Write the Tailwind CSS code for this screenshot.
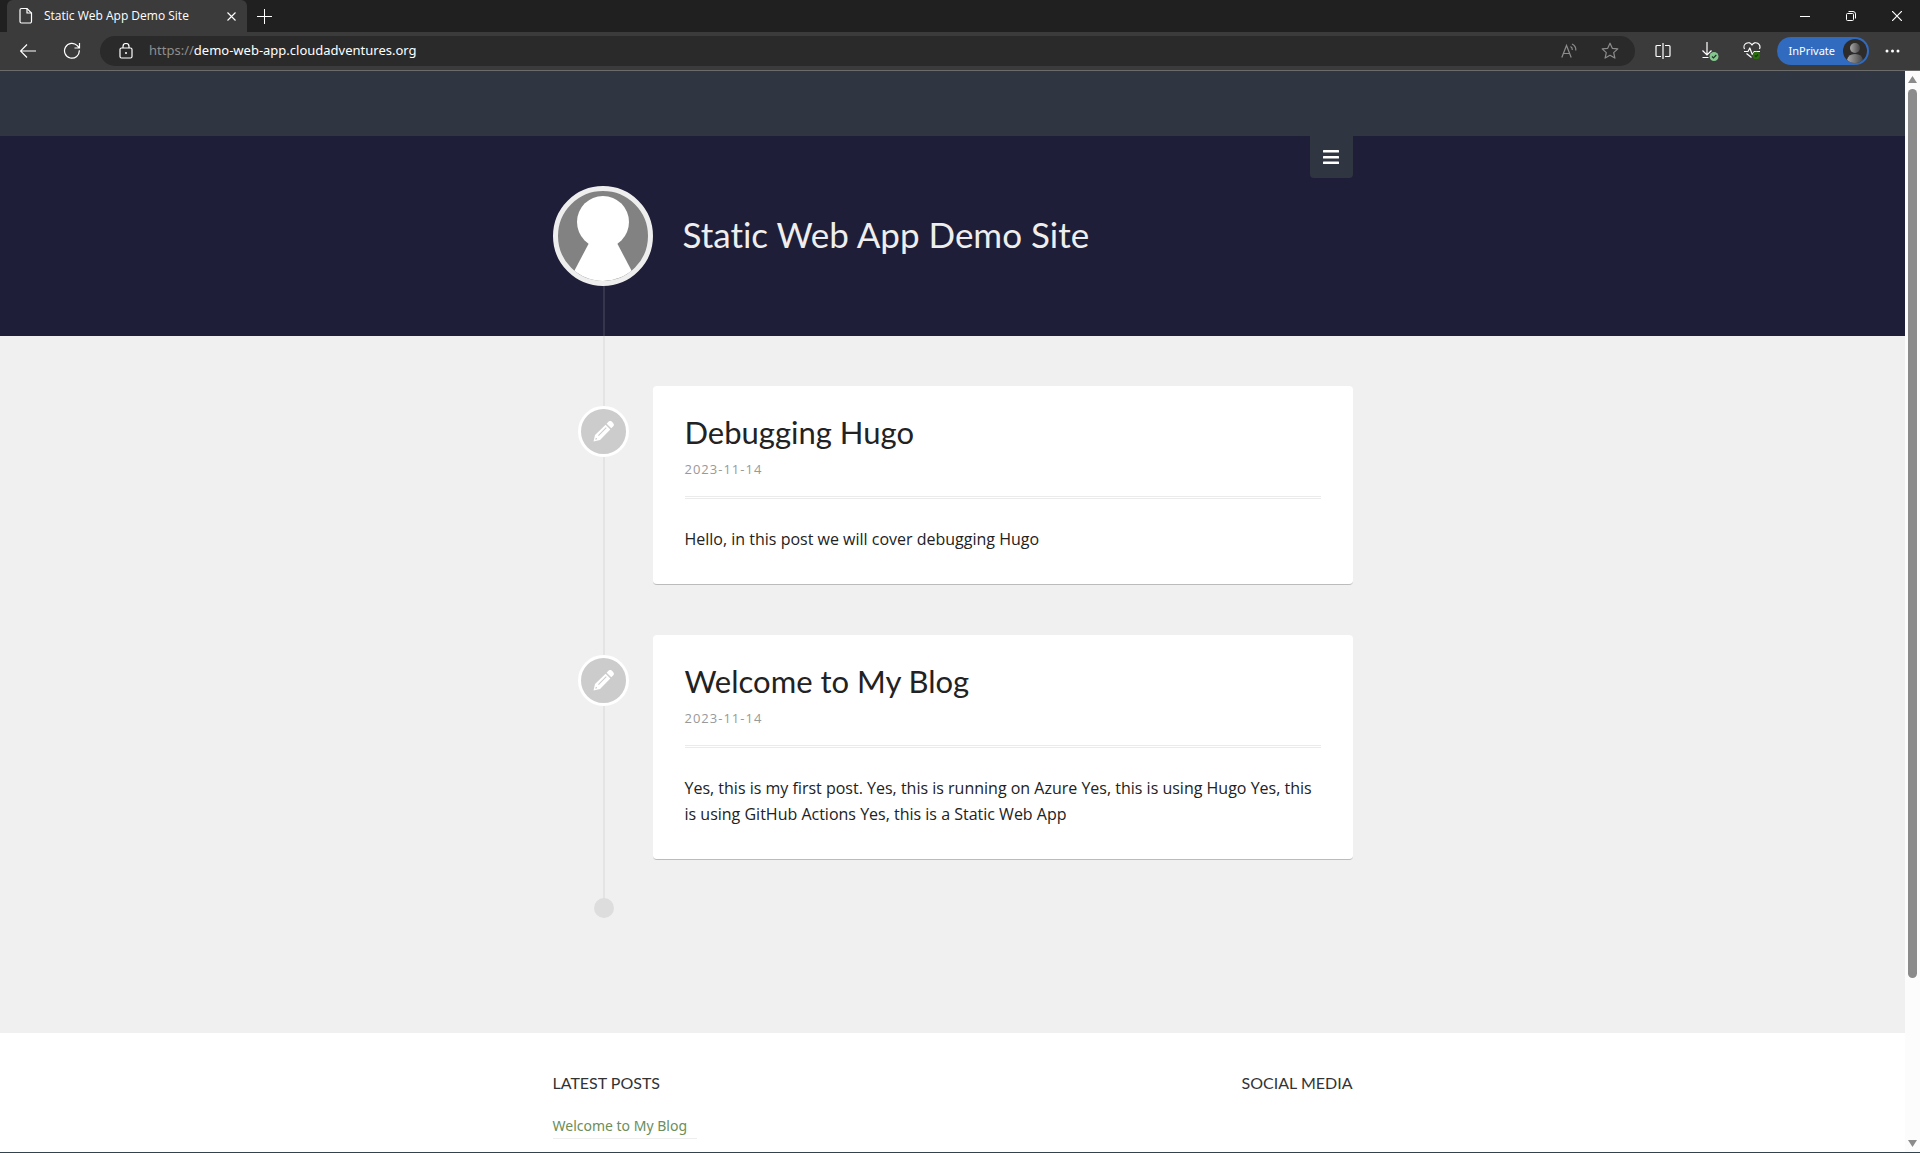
<!DOCTYPE html>
<html lang="en">
<head>
<meta charset="utf-8">
<title>Static Web App Demo Site</title>
<script src="https://cdn.jsdelivr.net/npm/@tailwindcss/browser@4"></script>
</head>
<body class="flex h-screen flex-col overflow-hidden bg-[#202020] font-['Open_Sans',sans-serif] text-[#222]">

<!-- Tab strip -->
<header class="shrink-0">
  <div class="flex h-8 items-stretch justify-between bg-[#202020] text-white">
    <div class="flex items-stretch pl-[7px]">
      <div class="flex w-60 items-center rounded-t-md bg-[#3b3b3b] pr-[6px] pl-3">
        <svg class="h-[18px] w-[14px]" viewBox="0 0 14 18" fill="none" stroke="#fff" stroke-width="1.2"><path d="M2.5 1.5h5.500l4.500 4.500v8.500a1.500 1.500 0 0 1-1.500 1.500h-8.500a1.500 1.500 0 0 1-1.500-1.500v-11.500a1.500 1.500 0 0 1 1.500-1.500z"/><path d="M8 1.500v4.500h4.500"/></svg>
        <span class="ml-[11px] flex-1 text-xs">Static Web App Demo Site</span>
        <button aria-label="Close tab" class="grid size-5 place-items-center"><svg class="size-[9px]" viewBox="0 0 9 9" stroke="#fff" stroke-width="1.100"><path d="M.5.5l8 8M8.500.5l-8 8"/></svg></button>
      </div>
      <button aria-label="New tab" class="grid w-[35px] place-items-center"><svg class="size-[15px]" viewBox="0 0 15 15" stroke="#fff"><path d="M7.500 0v15M0 7.500h15"/></svg></button>
    </div>
    <div class="flex">
      <button aria-label="Minimize" class="grid w-[46px] place-items-center"><svg class="size-[10px]" viewBox="0 0 10 10" stroke="#fff"><path d="M0 5.500h10"/></svg></button>
      <button aria-label="Restore" class="grid w-[46px] place-items-center"><svg class="size-[10px]" viewBox="0 0 10 10" fill="none" stroke="#fff"><rect x=".5" y="2.500" width="7" height="7" rx="1"/><path d="M2.500.5h4.500a2.500 2.500 0 0 1 2.500 2.500v4.500"/></svg></button>
      <button aria-label="Close" class="grid w-[46px] place-items-center"><svg class="size-[10px]" viewBox="0 0 10 10" stroke="#fff" stroke-width="1.200"><path d="M0 0l10 10M10 0l-10 10"/></svg></button>
    </div>
  </div>

  <!-- Toolbar -->
  <div class="flex h-[39px] items-center border-b border-[#6b6b6b] bg-[#3b3b3b] text-white">
    <button aria-label="Back" class="ml-2 grid w-10 place-items-center"><svg class="h-[14px] w-4" viewBox="0 0 16 14" fill="none" stroke="#fff" stroke-width="1.200"><path d="M16 7h-15M7 .5l-6.500 6.500l6.500 6.500"/></svg></button>
    <button aria-label="Refresh" class="ml-1 grid w-10 place-items-center"><svg class="size-[18px]" viewBox="0 0 18 18" fill="none" stroke="#fff" stroke-width="1.200"><path d="M16.300 8.300a7.400 7.400 0 1 1-2-4.600l2 2.300M16.500 1v5h-5"/></svg></button>
    <div class="ml-2 flex h-[30px] flex-1 items-center rounded-full bg-[#2a2a2a] pr-4 pl-[19px]">
      <svg class="h-4 w-[14px]" viewBox="0 0 14 16" fill="none" stroke="#fff" stroke-width="1.200"><rect x="1" y="5" width="12" height="10" rx="1.500"/><path d="M4 5v-1.500a3 3 0 0 1 6 0v1.500"/><circle cx="7" cy="10" r="1" fill="#fff" stroke="none"/></svg>
      <a href="https://demo-web-app.cloudadventures.org" class="ml-4 flex-1 font-['Noto_Sans',sans-serif] text-[13px]"><span class="text-[#8f8f8f]">https://</span>demo-web-app.cloudadventures.org</a>
      <button aria-label="Read aloud" class="mr-6"><svg class="size-4" viewBox="0 0 16 16" fill="none" stroke="#8c8c8c" stroke-width="1.200"><path d="M.8 14.500l4.700-12l4.700 12M2.400 10.500h6.200M9.500 3.500q2 1 1.800 3.500M11 1q4.200 2 3.800 6.500"/></svg></button>
      <button aria-label="Add to favorites"><svg class="size-[18px]" viewBox="0 0 18 18" fill="none" stroke="#8c8c8c" stroke-width="1.200" stroke-linejoin="round"><path d="M9 1.200l2.300 5.100l5.500.6l-4.100 3.700l1.200 5.500l-4.900-2.800l-4.900 2.800l1.200-5.500l-4.100-3.700l5.500-.6z"/></svg></button>
    </div>
    <button aria-label="Split screen" class="ml-5"><svg class="size-4" viewBox="0 0 16 16" fill="none" stroke="#fff" stroke-width="1.200"><path d="M6 2.500h-4q-1 0-1 1v9q0 1 1 1h4M10 2.500h4q1 0 1 1v9q0 1-1 1h-4M8 0v16"/></svg></button>
    <button aria-label="Downloads" class="ml-[30px]"><svg class="h-5 w-[18px]" viewBox="0 0 18 20" fill="none" stroke="#fff" stroke-width="1.200"><path d="M6 1v13M1.500 9.500l4.500 4.500l4.500-4.500M1.500 16.500h6"/><circle cx="13" cy="15.500" r="4.500" fill="#86c690" stroke="none"/><path d="M11 15.500l1.500 1.500l2.800-3" stroke="#1f3a24"/></svg></button>
    <button aria-label="Browser essentials" class="ml-6"><svg class="h-5 w-[18px]" viewBox="0 0 18 20" fill="none" stroke="#fff" stroke-width="1.200" stroke-linejoin="round"><path d="M1.500 8a4.200 4.200 0 0 1 7.500-4a4.200 4.200 0 0 1 7.500 4M1 10.500h4l1.800-3.500l2.500 6.500l2-3h5.700M3.500 12.500l5 4"/><circle cx="13.300" cy="14.500" r="3.700" fill="#2a6d0c" stroke="none"/><path d="M11.800 14.500l1.200 1.200l2-2.200" stroke="#123b05"/></svg></button>
    <button class="ml-4 flex h-7 items-center rounded-full bg-[#316bc0] pr-[2px] pl-3 font-['Noto_Sans',sans-serif] text-[11px]"><span class="mr-2">InPrivate</span>
      <svg class="size-6 rounded-full" viewBox="0 0 24 24"><defs><linearGradient id="g"><stop offset="0" stop-color="#aaa"/><stop offset="1" stop-color="#444"/></linearGradient></defs><rect width="24" height="24" fill="#2d2c2b"/><circle cx="12" cy="9" r="5" fill="url(#g)"/><path d="M4 21q1-6 8-6t8 6l-3 3h-10z" fill="url(#g)"/></svg></button>
    <button aria-label="Settings and more" class="mr-5 ml-4"><svg class="h-1 w-[15px]" viewBox="0 0 15 4" fill="#fff"><circle cx="2" cy="2" r="1.500"/><circle cx="7.500" cy="2" r="1.500"/><circle cx="13" cy="2" r="1.500"/></svg></button>
  </div>
</header>

<div class="flex min-h-0 flex-1 border-b border-[#33424f]">
  <div class="min-w-0 flex-1 overflow-hidden bg-white">
    <div class="h-[65px] bg-[#303641]"></div>

    <!-- Banner -->
    <div class="bg-[#1f1e38]">
      <div class="relative mx-auto flex h-[200px] max-w-[800px] flex-col">
        <div class="flex flex-1 items-end gap-[30px]">
          <svg class="mt-[50px] size-[100px] shrink-0 rounded-full border-[5px] border-[#eee] bg-[#828282]" viewBox="0 0 90 90" fill="#fff"><circle cx="45" cy="31" r="26"/><path d="M31 52l-20 38h68l-20-38z"/></svg>
          <h1 class="flex h-[100px] items-center pb-1 font-['Lato',sans-serif] text-[35px] [font-variant-ligatures:none] text-[#eee]">Static Web App Demo Site</h1>
        </div>
        <div class="ml-[50px] h-[50px] w-[2px] bg-white/10"></div>
        <button aria-label="Menu" class="absolute top-0 right-0 grid h-[42px] w-[43px] place-items-center rounded-b bg-[#303641]"><svg class="h-[14px] w-4" viewBox="0 0 16 14" fill="#fff"><rect width="16" height="2.500" rx=".5"/><rect y="6" width="16" height="2.500" rx=".5"/><rect y="11.500" width="16" height="2.500" rx=".5"/></svg></button>
      </div>
    </div>

    <!-- Timeline -->
    <main class="bg-[#f0f0f0] pb-[115px]">
      <div class="relative mx-auto max-w-[800px] pt-[50px] pb-[20px]">
        <div class="absolute top-0 bottom-0 left-[50px] w-[2px] bg-[#e4e4e4]"></div>
        <div class="absolute bottom-0 left-[41px] size-5 rounded-full bg-[#ddd]"></div>

        <article class="mb-[50px] flex items-start">
          <div class="relative mt-5 mr-6 ml-[25px] grid size-[51px] shrink-0 place-items-center rounded-full border-[3px] border-white bg-[#ccc]"><svg class="size-[21px]" viewBox="0 0 20 20" fill="#fff"><path d="M13 2.500l1.700-1.700a2.400 2.400 0 0 1 3.400 0l1 1a2.400 2.400 0 0 1 0 3.400l-1.700 1.700zM12 3.500l4.500 4.500l-9.800 10l-6.200 1.600l1.400-6.300zM12.300 6l-7.500 7.500l.7.700l7.500-7.500zM2.600 16.300l-.4 1.500l1.500-.4v-1.100z" fill-rule="evenodd"/></svg></div>
          <div class="min-w-0 flex-1 rounded border-b border-[#bbb] bg-white px-8 pt-7 pb-8">
            <h2 class="font-['Lato',sans-serif] text-[31px] leading-9"><a href="#debugging-hugo">Debugging Hugo</a></h2>
            <time class="mt-2 block text-[13px] leading-[22px] tracking-[1px] text-[#999]">2023-11-14</time>
            <hr class="mt-4 h-[3px] border-y border-t border-[#ebebeb]">
            <p class="mt-[27px] text-base leading-[26px]">Hello, in this post we will cover debugging Hugo</p>
          </div>
        </article>

        <article class="mb-[38px] flex items-start">
          <div class="relative mt-5 mr-6 ml-[25px] grid size-[51px] shrink-0 place-items-center rounded-full border-[3px] border-white bg-[#ccc]"><svg class="size-[21px]" viewBox="0 0 20 20" fill="#fff"><path d="M13 2.500l1.700-1.700a2.400 2.400 0 0 1 3.400 0l1 1a2.400 2.400 0 0 1 0 3.400l-1.700 1.700zM12 3.500l4.500 4.500l-9.800 10l-6.200 1.600l1.400-6.300zM12.300 6l-7.500 7.500l.7.700l7.500-7.500zM2.600 16.300l-.4 1.500l1.500-.4v-1.100z" fill-rule="evenodd"/></svg></div>
          <div class="min-w-0 flex-1 rounded border-b border-[#bbb] bg-white px-8 pt-7 pb-8">
            <h2 class="font-['Lato',sans-serif] text-[31px] leading-9"><a href="#welcome">Welcome to My Blog</a></h2>
            <time class="mt-2 block text-[13px] leading-[22px] tracking-[1px] text-[#999]">2023-11-14</time>
            <hr class="mt-4 h-[3px] border-y border-t border-[#ebebeb]">
            <p class="mt-[27px] text-base leading-[26px]">Yes, this is my first post. Yes, this is running on Azure Yes, this is using Hugo Yes, this is using GitHub Actions Yes, this is a Static Web App</p>
          </div>
        </article>
      </div>
    </main>

    <footer class="mx-auto flex max-w-[800px] justify-between pt-[38px]">
      <section>
        <h3 class="font-['Lato',sans-serif] text-base leading-6 text-[#333]">LATEST POSTS</h3>
        <a href="#welcome" class="mt-[18px] block border-b border-[#eee] pr-[10px] font-['Noto_Sans',sans-serif] text-sm leading-[25px] text-[#6b8e5a]">Welcome to My Blog</a>
      </section>
      <section>
        <h3 class="font-['Lato',sans-serif] text-base leading-6 text-[#333]">SOCIAL MEDIA</h3>
      </section>
    </footer>
  </div>

  <!-- Scrollbar -->
  <div class="flex w-[15px] shrink-0 flex-col items-center bg-[#fcfcfc] py-[5px]">
    <svg class="h-[7px] w-[9px]" viewBox="0 0 9 7" fill="#8b8b8b"><path d="M4.500 0l4.500 7h-9z"/></svg>
    <div class="mt-[6px] h-[83%] w-[9px] rounded-full bg-[#8b8b8b]"></div>
    <svg class="mt-auto h-[7px] w-[9px]" viewBox="0 0 9 7" fill="#8b8b8b"><path d="M0 0h9l-4.500 7z"/></svg>
  </div>
</div>
</body>
</html>
